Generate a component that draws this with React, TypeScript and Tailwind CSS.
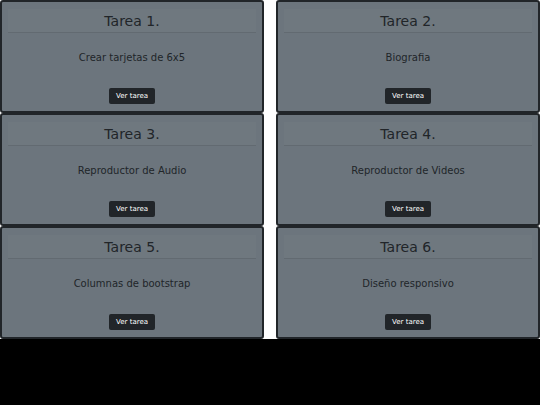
const tareas = [
  { n: 1, titulo: "Crear tarjetas de 6x5" },
  { n: 2, titulo: "Biografia" },
  { n: 3, titulo: "Reproductor de Audio" },
  { n: 4, titulo: "Reproductor de Videos" },
  { n: 5, titulo: "Columnas de bootstrap" },
  { n: 6, titulo: "Diseño responsivo" },
];

function Tarjeta({ n, titulo }: { n: number; titulo: string }) {
  return (
    <div className="h-[113px] flex flex-col rounded-[3px] border-2 border-[#212529] bg-[#6c757d] text-[#212529]">
      <div className="mx-[6px] mt-[7px] h-[24px] flex items-center justify-center border-b border-[#626a71] bg-[#6f787f] text-[14px] leading-none">
        Tarea {n}.
      </div>
      <p className="mt-[20px] text-center text-[10px] leading-none">{titulo}</p>
      <div className="mt-[25px] flex justify-center">
        <button className="h-[16px] px-[7px] rounded-[2px] bg-[#212529] text-[7px] text-white leading-none">
          Ver tarea
        </button>
      </div>
    </div>
  );
}

export default function App() {
  return (
    <div className="min-h-screen bg-black" style={{ fontFamily: '"DejaVu Sans", sans-serif' }}>
      <div className="grid grid-cols-2 gap-x-3 bg-white">
        {tareas.map((t) => (
          <Tarjeta key={t.n} n={t.n} titulo={t.titulo} />
        ))}
      </div>
    </div>
  );
}
